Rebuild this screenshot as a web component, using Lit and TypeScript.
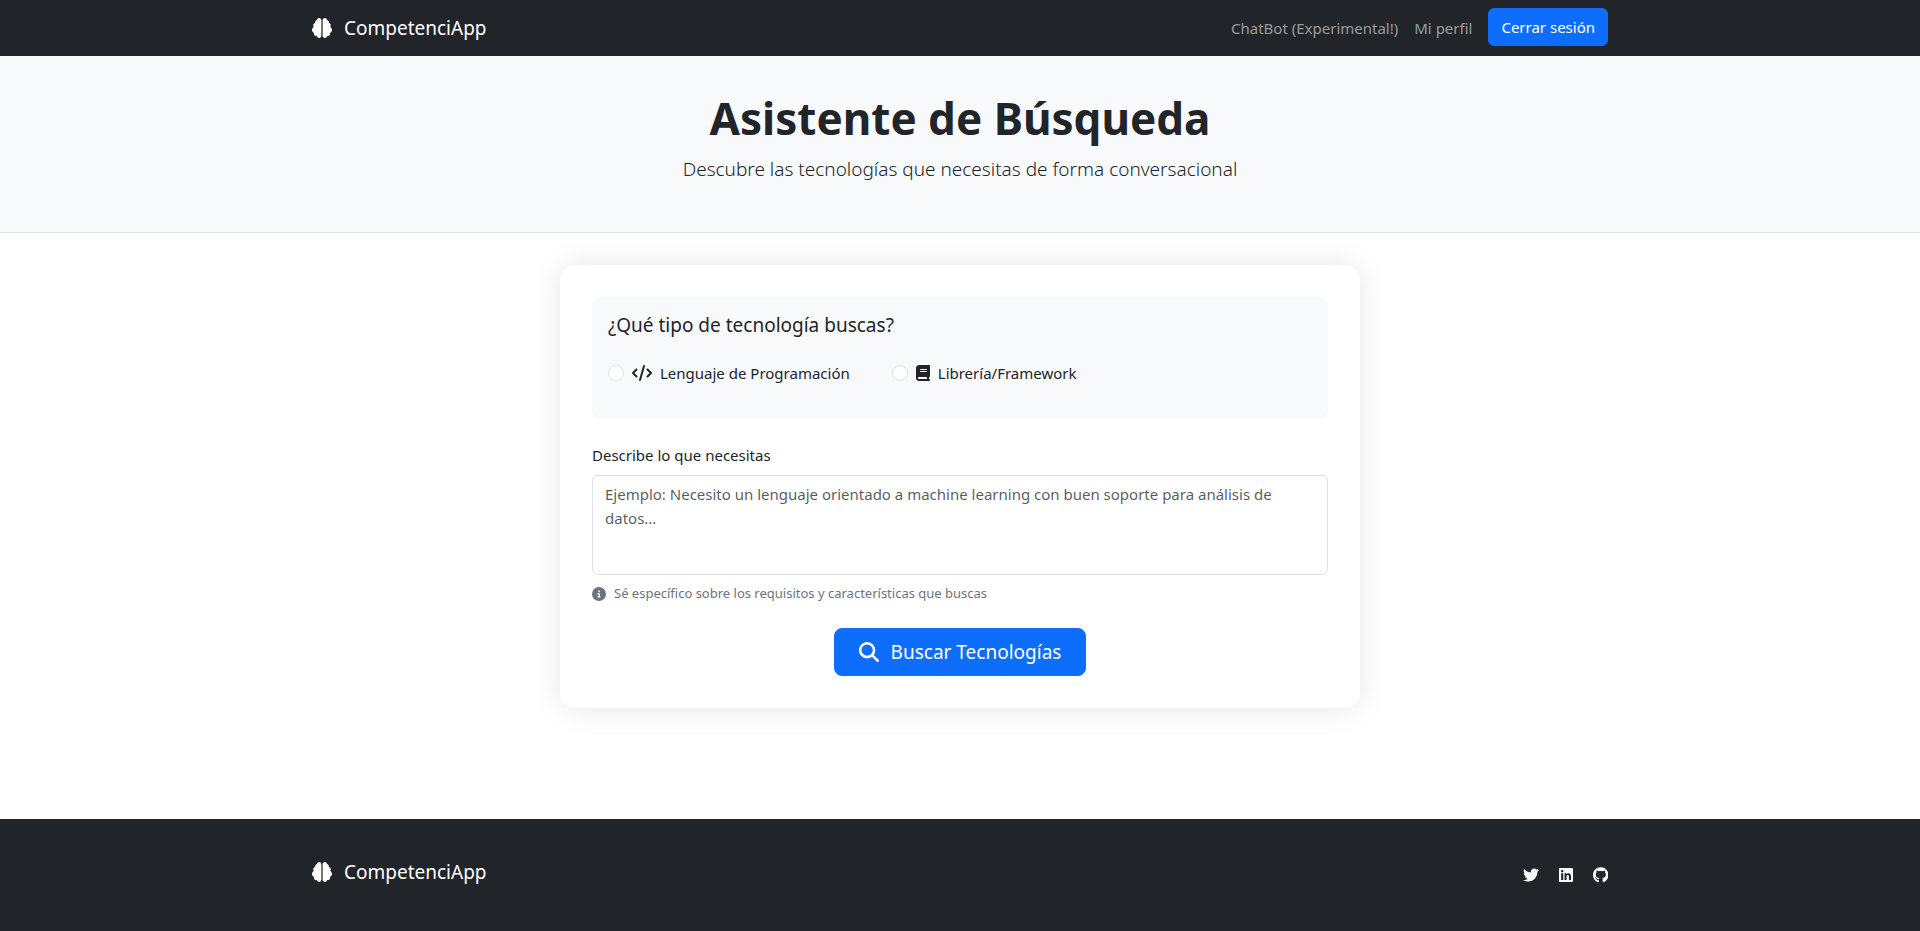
import { LitElement, html, css, svg } from "lit";
import { customElement, state } from "lit/decorators.js";

interface Glyph {
  box: string;
  d: string;
}

const glyphs: Record<string, Glyph> = {
  brain: {
    box: "0 0 512 512",
    d: "M184 0c30.9 0 56 25.1 56 56V456c0 30.9-25.1 56-56 56c-28.9 0-52.7-21.9-55.7-50.1c-5.2 1.4-10.7 2.1-16.3 2.1c-35.3 0-64-28.7-64-64c0-7.4 1.3-14.6 3.6-21.2C21.4 367.4 0 338.2 0 304c0-31.9 18.7-59.5 45.8-72.3C37.1 220.8 32 207 32 192c0-30.7 21.6-56.3 50.4-62.6C80.8 123.9 80 118 80 112c0-29.9 20.6-55.1 48.3-62.1C131.3 21.9 155.1 0 184 0zM328 0c28.9 0 52.6 21.9 55.7 49.9c27.8 7 48.3 32.1 48.3 62.1c0 6-.8 11.9-2.4 17.4c28.8 6.2 50.4 31.9 50.4 62.6c0 15-5.1 28.8-13.8 39.7C493.3 244.5 512 272.1 512 304c0 34.2-21.4 63.4-51.6 74.8c2.3 6.6 3.6 13.8 3.6 21.2c0 35.3-28.7 64-64 64c-5.6 0-11.1-.7-16.3-2.1c-3 28.2-26.8 50.1-55.7 50.1c-30.9 0-56-25.1-56-56V56c0-30.9 25.1-56 56-56z",
  },
  code: {
    box: "0 0 640 512",
    d: "M392.8 1.2c-17-4.9-34.7 5-39.6 22l-128 448c-4.9 17 5 34.7 22 39.6s34.7-5 39.6-22l128-448c4.9-17-5-34.7-22-39.6zm80.6 120.1c-12.5 12.5-12.5 32.8 0 45.3L562.7 256l-89.4 89.4c-12.5 12.5-12.5 32.8 0 45.3s32.8 12.5 45.3 0l112-112c12.5-12.5 12.5-32.8 0-45.3l-112-112c-12.5-12.5-32.8-12.5-45.3 0zm-306.7 0c-12.5-12.5-32.8-12.5-45.3 0l-112 112c-12.5 12.5-12.5 32.8 0 45.3l112 112c12.5 12.5 32.8 12.5 45.3 0s12.5-32.8 0-45.3L77.3 256l89.4-89.4c12.5-12.5 12.5-32.8 0-45.3z",
  },
  book: {
    box: "0 0 448 512",
    d: "M96 0C43 0 0 43 0 96V416c0 53 43 96 96 96H384h32c17.7 0 32-14.3 32-32s-14.3-32-32-32V384c17.7 0 32-14.3 32-32V32c0-17.7-14.3-32-32-32H384 96zm0 384H352v64H96c-17.7 0-32-14.3-32-32s14.3-32 32-32zm32-240c0-8.8 7.2-16 16-16H336c8.8 0 16 7.2 16 16s-7.2 16-16 16H144c-8.8 0-16-7.2-16-16zm16 48H336c8.8 0 16 7.2 16 16s-7.2 16-16 16H144c-8.8 0-16-7.2-16-16s7.2-16 16-16z",
  },
  info: {
    box: "0 0 512 512",
    d: "M256 512A256 256 0 1 0 256 0a256 256 0 1 0 0 512zM216 336h24V272H216c-13.3 0-24-10.7-24-24s10.7-24 24-24h48c13.3 0 24 10.7 24 24v88h8c13.3 0 24 10.7 24 24s-10.7 24-24 24H216c-13.3 0-24-10.7-24-24s10.7-24 24-24zm40-208a32 32 0 1 1 0 64 32 32 0 1 1 0-64z",
  },
  search: {
    box: "0 0 512 512",
    d: "M416 208c0 45.9-14.9 88.3-40 122.7L502.6 457.4c12.5 12.5 12.5 32.8 0 45.3s-32.8 12.5-45.3 0L330.7 376c-34.4 25.2-76.8 40-122.7 40C93.1 416 0 322.9 0 208S93.1 0 208 0S416 93.1 416 208zM208 352a144 144 0 1 0 0-288 144 144 0 1 0 0 288z",
  },
  twitter: {
    box: "0 0 512 512",
    d: "M459.37 151.716c.325 4.548.325 9.097.325 13.645 0 138.72-105.583 298.558-298.558 298.558-59.452 0-114.68-17.219-161.137-47.106 8.447.974 16.568 1.299 25.34 1.299 49.055 0 94.213-16.568 130.274-44.832-46.132-.975-84.792-31.188-98.112-72.772 6.498.974 12.995 1.624 19.818 1.624 9.421 0 18.843-1.3 27.614-3.573-48.081-9.747-84.143-51.98-84.143-102.985v-1.299c13.969 7.797 30.214 12.67 47.431 13.319-28.264-18.843-46.781-51.005-46.781-87.391 0-19.492 5.197-37.36 14.294-52.954 51.655 63.675 129.3 105.258 216.365 109.807-1.624-7.797-2.599-15.918-2.599-24.04 0-57.828 46.782-104.934 104.934-104.934 30.213 0 57.502 12.67 76.67 33.137 23.715-4.548 46.456-13.32 66.599-25.34-7.798 24.366-24.366 44.833-46.132 57.827 21.117-2.273 41.584-8.122 60.426-16.243-14.292 20.791-32.161 39.308-52.628 54.253z",
  },
  linkedin: {
    box: "0 0 448 512",
    d: "M416 32H31.9C14.3 32 0 46.5 0 64.3v383.4C0 465.5 14.3 480 31.9 480H416c17.6 0 32-14.5 32-32.3V64.3c0-17.8-14.4-32.3-32-32.3zM135.4 416H69V202.2h66.5V416zm-33.2-243c-21.3 0-38.5-17.3-38.5-38.5S80.9 96 102.2 96c21.2 0 38.5 17.3 38.5 38.5 0 21.3-17.2 38.5-38.5 38.5zm282.1 243h-66.4V312c0-24.8-.5-56.7-34.5-56.7-34.6 0-39.9 27-39.9 54.9V416h-66.4V202.2h63.7v29.2h.9c8.9-16.8 30.6-34.5 62.9-34.5 67.2 0 79.7 44.3 79.7 101.9V416z",
  },
  github: {
    box: "0 0 496 512",
    d: "M244.8 8C106.1 8 0 113.3 0 252c0 110.9 69.8 205.8 169.5 239.2 12.8 2.3 17.3-5.6 17.3-12.1 0-6.2-.3-40.4-.3-61.4 0 0-70 15-84.7-29.8 0 0-11.4-29.1-27.8-36.6 0 0-22.9-15.7 1.6-15.4 0 0 24.9 2 38.6 25.8 21.9 38.6 58.6 27.5 72.9 20.9 2.3-16 8.8-27.1 16-33.7-55.9-6.2-112.3-14.3-112.3-110.5 0-27.5 7.6-41.3 23.6-58.9-2.6-6.5-11.1-33.3 2.6-67.9 20.9-6.5 69 27 69 27 20-5.6 41.5-8.5 62.8-8.5s42.8 2.9 62.8 8.5c0 0 48.1-33.6 69-27 13.7 34.7 5.2 61.4 2.6 67.9 16 17.7 25.8 31.5 25.8 58.9 0 96.5-58.9 104.2-114.8 110.5 9.2 7.9 17 22.9 17 46.4 0 33.7-.3 75.4-.3 83.6 0 6.5 4.6 14.4 17.3 12.1C428.2 457.8 496 362.9 496 252 496 113.3 383.5 8 244.8 8z",
  },
};

const icon = (name: string, size = "") => html`
  <svg class="icon ${size}" viewBox=${glyphs[name].box} aria-hidden="true">
    ${svg`<path d=${glyphs[name].d}></path>`}
  </svg>`;

const kinds = [
  { value: "lenguaje", icon: "code", label: "Lenguaje de Programación" },
  { value: "libreria", icon: "book", label: "Librería/Framework" },
];

const networks = [
  { icon: "twitter", name: "Twitter" },
  { icon: "linkedin", name: "LinkedIn" },
  { icon: "github", name: "GitHub" },
];

@customElement("app-root")
export class AppRoot extends LitElement {
  @state() private kind = "";

  static styles = css`
    :host {
      display: flex;
      flex-direction: column;
      min-height: 100vh;
      background: #fff;
      color: #212529;
      font-family: "Noto Sans", sans-serif;
      font-size: 15px;
      line-height: 24px;
    }
    *, *::before, *::after {
      box-sizing: border-box;
    }
    .icon {
      height: 16px;
      fill: currentColor;
      flex: none;
    }
    .icon.large {
      height: 20px;
    }
    .icon.small {
      height: 14px;
    }
    .container {
      width: 100%;
      max-width: 1320px;
      margin: 0 auto;
      padding: 0 12px;
      display: flex;
      align-items: center;
      justify-content: space-between;
    }
    .topbar {
      background: #212529;
      padding: 8px 0;
    }
    .brand {
      display: flex;
      align-items: center;
      gap: 12px;
      color: #fff;
      font-size: 19px;
      line-height: 30px;
      text-decoration: none;
    }
    .nav {
      display: flex;
      align-items: flex-start;
      gap: 16px;
      height: 40px;
    }
    .nav-link {
      padding: 8px 0;
      color: rgba(255, 255, 255, 0.55);
      text-decoration: none;
    }
    .btn {
      font: inherit;
      color: #fff;
      background: #0d6efd;
      border: 1px solid #0d6efd;
      border-radius: 6px;
      padding: 6px 12px;
      cursor: pointer;
    }
    .btn.big {
      display: flex;
      align-items: center;
      gap: 12px;
      margin: 0 auto;
      padding: 8px 24px;
      border-radius: 8px;
      font-size: 19px;
      line-height: 30px;
    }
    .hero {
      background: #f8f9fb;
      border-bottom: 1px solid #dee2e6;
      padding: 32px 12px 48px;
      text-align: center;
    }
    .title {
      margin: 0 0 6px;
      font-size: 44px;
      line-height: 60px;
      font-weight: 700;
    }
    .lead {
      margin: 0;
      font-size: 19px;
      line-height: 30px;
      font-weight: 300;
    }
    .content {
      flex: 1;
      padding: 32px 12px;
    }
    .card {
      max-width: 800px;
      margin: 0 auto;
      padding: 32px;
      border-radius: 15px;
      background: #fff;
      box-shadow: 0 0 30px rgba(0, 0, 0, 0.1);
    }
    .kinds {
      margin: 0 0 24px;
      padding: 16px 16px 34px;
      border: 0;
      border-radius: 10px;
      background: #f8f9fb;
    }
    .legend {
      float: left;
      width: 100%;
      margin-bottom: 24px;
      padding: 0;
      font-size: 19px;
      line-height: 24px;
    }
    .options {
      clear: both;
      display: flex;
      flex-wrap: wrap;
      gap: 8px 42px;
    }
    .option {
      display: flex;
      align-items: center;
      gap: 8px;
    }
    .radio {
      appearance: none;
      width: 16px;
      height: 16px;
      margin: 0;
      border: 1px solid #dee2e6;
      border-radius: 50%;
      background: #fff;
    }
    .radio:checked {
      border: 5px solid #0d6efd;
    }
    .label {
      display: block;
      margin-bottom: 8px;
    }
    .textarea {
      display: block;
      width: 100%;
      height: 100px;
      padding: 6px 12px;
      font: inherit;
      color: inherit;
      border: 1px solid #dee2e6;
      border-radius: 6px;
      background: #fff;
      resize: none;
    }
    .textarea::placeholder {
      color: rgba(33, 37, 41, 0.75);
      opacity: 1;
    }
    .hint {
      display: flex;
      align-items: center;
      gap: 8px;
      margin: 8px 0 24px;
      color: #6c757d;
      font-size: 13px;
      line-height: 21px;
    }
    .footer {
      background: #212529;
      padding: 38px 0 44px;
    }
    .social {
      display: flex;
      gap: 20px;
      padding-top: 6px;
    }
    .social-link {
      display: flex;
      color: #f8f9fa;
    }
  `;

  private brand() {
    return html`<a class="brand" href="#">${icon("brain", "large")}<span>CompetenciApp</span></a>`;
  }

  render() {
    return html`
      <header class="topbar">
        <div class="container">
          ${this.brand()}
          <nav class="nav">
            <a class="nav-link" href="#">ChatBot (Experimental!)</a>
            <a class="nav-link" href="#">Mi perfil</a>
            <button class="btn" type="button">Cerrar sesión</button>
          </nav>
        </div>
      </header>
      <section class="hero">
        <h1 class="title">Asistente de Búsqueda</h1>
        <p class="lead">Descubre las tecnologías que necesitas de forma conversacional</p>
      </section>
      <main class="content">
        <form class="card" @submit=${(e: Event) => e.preventDefault()}>
          <fieldset class="kinds">
            <legend class="legend">¿Qué tipo de tecnología buscas?</legend>
            <div class="options">
              ${kinds.map(
                (k) => html`
                  <label class="option">
                    <input
                      class="radio"
                      type="radio"
                      name="kind"
                      .value=${k.value}
                      .checked=${this.kind === k.value}
                      @change=${() => (this.kind = k.value)}
                    />
                    ${icon(k.icon)}
                    <span>${k.label}</span>
                  </label>
                `
              )}
            </div>
          </fieldset>
          <label class="label" for="query">Describe lo que necesitas</label>
          <textarea
            class="textarea"
            id="query"
            placeholder="Ejemplo: Necesito un lenguaje orientado a machine learning con buen soporte para análisis de datos..."
          ></textarea>
          <p class="hint">
            ${icon("info", "small")}
            <span>Sé específico sobre los requisitos y características que buscas</span>
          </p>
          <button class="btn big" type="submit">
            ${icon("search", "large")}<span>Buscar Tecnologías</span>
          </button>
        </form>
      </main>
      <footer class="footer">
        <div class="container">
          ${this.brand()}
          <div class="social">
            ${networks.map(
              (n) => html`<a class="social-link" href="#" aria-label=${n.name}>${icon(n.icon)}</a>`
            )}
          </div>
        </div>
      </footer>
    `;
  }
}
